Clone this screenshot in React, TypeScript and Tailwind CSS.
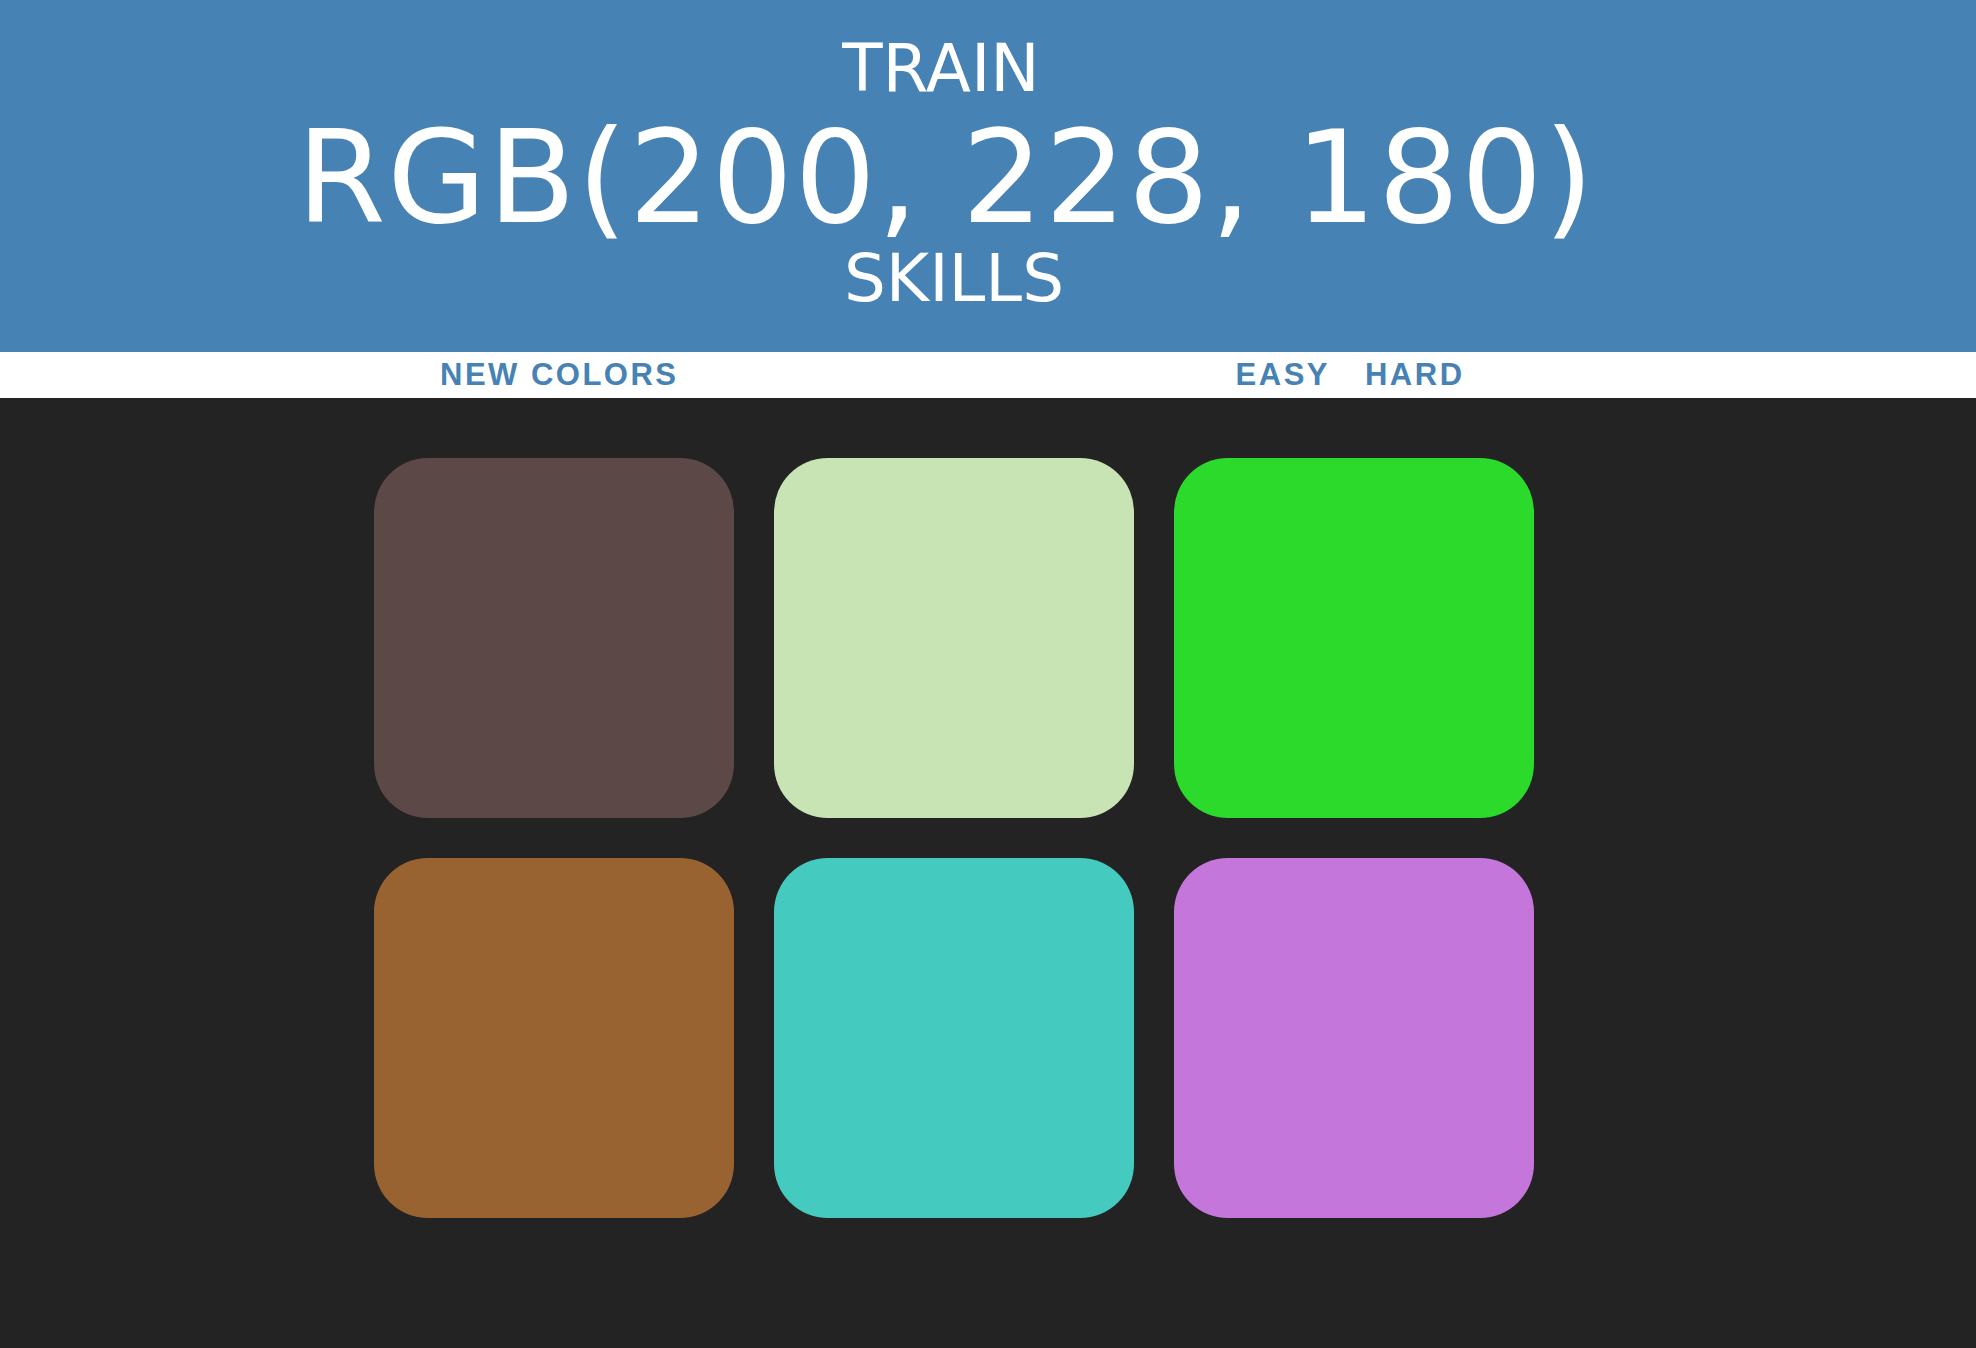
import React from "react";

const SQUARES = ["#5c4846", "#c8e4b4", "#2bda2b", "#996331", "#44cabe", "#c476da"];

export default function App() {
  return (
    <div className="min-h-[1348px] w-full bg-[#232323] font-['DejaVu_Sans',sans-serif]">
      {/* Header */}
      <header className="flex h-[352px] flex-col items-center bg-[#4682b4] pr-[68px] pt-[36px] text-white">
        <div className="pr-[26px] text-[66px] leading-[66px]">TRAIN</div>
        <div className="mt-[12px] pr-[16px] text-[128px] leading-[128px] tracking-[1.5px]">RGB(200, 228, 180)</div>
        <div className="mt-[4px] text-[66px] leading-[66px]">SKILLS</div>
      </header>

      {/* Stripe */}
      <div className="h-[46px] bg-white">
        <div className="ml-[354px] flex h-full w-[1200px] items-center font-['Liberation_Sans',sans-serif] text-[31px] font-bold uppercase tracking-[2.5px] text-[#4682b4]">
          <button className="ml-[86px] uppercase">New Colors</button>
          <button className="ml-[557px] uppercase">Easy</button>
          <button className="ml-[35px] uppercase">Hard</button>
        </div>
      </div>

      {/* Squares */}
      <div className="ml-[374px] mt-[60px] grid w-[1160px] grid-cols-3 gap-[40px]">
        {SQUARES.map((c) => (
          <div key={c} className="h-[360px] w-[360px] rounded-[54px]" style={{ backgroundColor: c }} />
        ))}
      </div>
    </div>
  );
}
